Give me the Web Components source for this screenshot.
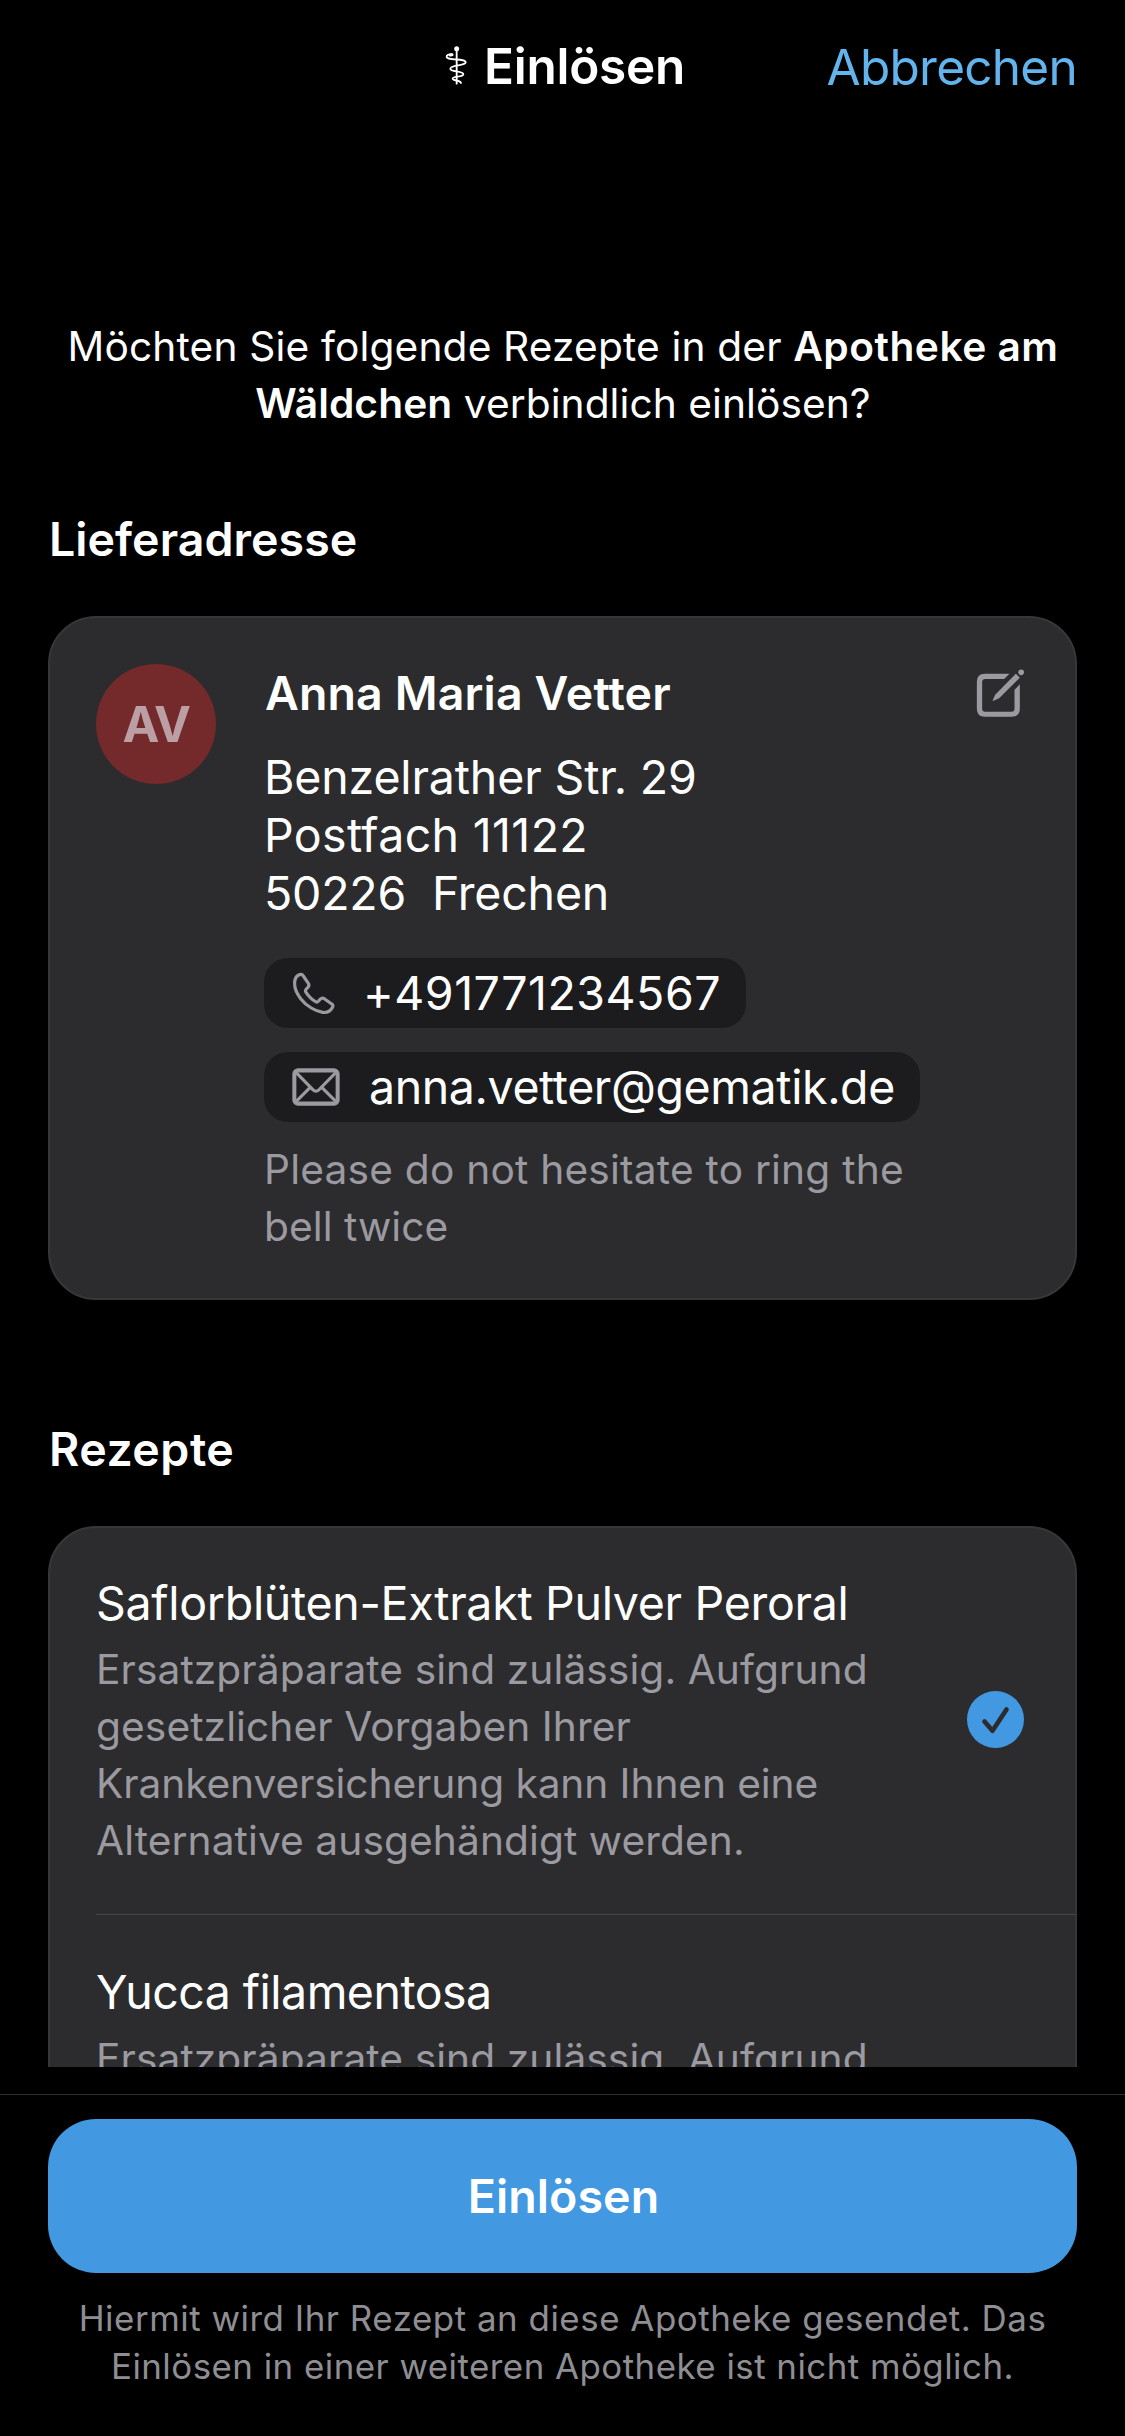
<!DOCTYPE html>
<html lang="de">
<head>
<meta charset="utf-8">
<title>Einlösen</title>
<style>
  html, body { margin: 0; background: #000; }
  body {
    width: 1125px; height: 2436px; overflow: hidden;
    font-family: Inter, "Liberation Sans", sans-serif; color: #fff;
    --card: #2c2c2e; --card-edge: #37373a; --muted: #9b9aa1; --accent: #4299e1;
  }
</style>
</head>
<body>
<redeem-screen>
  <nav-header slot="header" action="Abbrechen">Einlösen</nav-header>

  <intro-text><span style="letter-spacing:.14px">Möchten Sie folgende Rezepte in der </span><b style="letter-spacing:.5px">Apotheke am</b><br><b style="letter-spacing:.1px">Wäldchen</b> <span style="letter-spacing:.05px">verbindlich einlösen?</span></intro-text>

  <content-section label="Lieferadresse" style="--label-spacing:.05px">
    <address-card initials="AV">
      <span slot="name">Anna Maria Vetter</span>
      <span slot="address"><span style="letter-spacing:-.15px">Benzelrather Str. 29</span><br><span style="letter-spacing:.35px">Postfach 11122</span><br><span style="letter-spacing:-.2px">50226&nbsp; Frechen</span></span>
      <contact-pill slot="contact" icon="phone" style="width:482px;letter-spacing:.5px">+491771234567</contact-pill>
      <contact-pill slot="contact" icon="mail" style="width:656px;letter-spacing:-.4px;--gap:29px">anna.vetter@gematik.de</contact-pill>
      <span slot="note">Please do not hesitate to ring the<br><span style="letter-spacing:.05px">bell twice</span></span>
    </address-card>
  </content-section>

  <content-section label="Rezepte" style="--label-spacing:.5px">
    <prescription-list>
      <prescription-row checked>
        <span slot="title" style="letter-spacing:-.3px">Saflorblüten-Extrakt Pulver Peroral</span>
        Ersatzpräparate sind zulässig. Aufgrund gesetzlicher Vorgaben Ihrer <span style="letter-spacing:-.1px">Krankenversicherung kann Ihnen eine</span> Alternative ausgehändigt werden.
      </prescription-row>
      <prescription-row>
        <span slot="title" style="letter-spacing:-.52px">Yucca filamentosa</span>
        Ersatzpräparate sind zulässig. Aufgrund
      </prescription-row>
    </prescription-list>
  </content-section>

  <action-footer slot="footer" label="Einlösen">Hiermit wird Ihr Rezept an diese Apotheke gesendet. Das<br><span style="letter-spacing:.46px">Einlösen in einer weiteren Apotheke ist nicht möglich.</span></action-footer>
</redeem-screen>

<script>
const define = (name, render) => customElements.define(name, class extends HTMLElement {
  constructor() { super(); this.attachShadow({ mode: 'open' }); }
  connectedCallback() { this.shadowRoot.innerHTML = render(this); }
});

const icons = {
  staff: `<svg width="24" height="40" viewBox="24 30 72 120" fill="none" stroke="#fff" stroke-linecap="round">
    <circle cx="62" cy="38" r="7.500" fill="#fff" stroke="none"/>
    <path d="M62 38V143" stroke-width="5.500"/>
    <path d="M48 56C38 53 31 57 32 63C34 75 89 66 89 79C88 90 43 86 43 98C43 109 82 103 82 115C81 124 49 120 50 128C52 135 72 132 75 141" stroke-width="5.500"/>
    <path d="M48 56l-6 1" stroke-width="9"/></svg>`,
  phone: `<svg width="43" height="43" viewBox="24 30 129 129" fill="none" stroke="#9b9aa1" stroke-width="9.500" stroke-linejoin="round">
    <path d="M44 39C50 36 55 37 58 42L73 64C76 69 75 73 71 77L66 82C63 86 64 88 66 91C74 103 84 113 95 119C98 121 101 120 104 117L108 112C112 108 116 107 121 110L142 125C147 128 148 132 145 137C138 149 128 153 116 151C95 148 68 133 50 110C36 92 31 76 32 62C32 51 35 44 44 39Z"/></svg>`,
  mail: `<svg width="48" height="38" viewBox="26 317 143 113" fill="none" stroke="#9b9aa1" stroke-width="12">
    <rect x="33" y="324" width="129" height="99" rx="11"/>
    <path d="M35 327L88 381Q97.500 391 107 381L160 327M35 420L81 374M160 420L114 374" stroke-width="9.500"/></svg>`,
  edit: `<svg width="49" height="48" viewBox="112 88 146 144" fill="#9b9aa1">
    <path d="M212 102H138Q114 102 114 126V207Q114 231 138 231H218Q243 231 243 207V134L227 150V207Q227 216 218 216H139Q130 216 130 207V127Q130 118 139 118H196Z"/>
    <path d="M231 102L243 114L181 176L164 183.500Q161 184 162 181L169 165Z"/>
    <circle cx="247" cy="98" r="8.500"/></svg>`,
  check: `<svg width="57" height="57" viewBox="80.500 92.500 171 171">
    <circle cx="166" cy="178" r="85.500" fill="#4299e1"/>
    <path d="M133 184L157 212L199 148" fill="none" stroke="#2c2c2e" stroke-width="14" stroke-linecap="round" stroke-linejoin="round"/></svg>`
};

define('redeem-screen', () => `<style>
  :host { display: flex; flex-direction: column; height: 2436px; }
  main { height: 1935px; overflow: hidden; }
  </style><slot name="header"></slot><main><slot></slot></main><slot name="footer"></slot>`);

define('nav-header', el => `<style>
  :host { display: grid; grid-template-columns: 1fr auto 1fr; align-items: start; box-sizing: border-box;
    height: 132px; padding: 36px 48px 0; font-size: 49.5px; line-height: 60px; }
  h1 { grid-column: 2; display: flex; align-items: center; gap: 16px; margin: 0; padding-left: 4px;
    font: inherit; font-weight: 600; letter-spacing: -.25px; }
  svg { display: block; }
  a { justify-self: end; margin-top: 1px; color: #63b3ed; letter-spacing: -.73px; }
  </style><h1>${icons.staff}<span><slot></slot></span></h1><a>${el.getAttribute('action')}</a>`);

define('intro-text', () => `<style>
  :host { display: block; padding: 186px 47px 77px 48px; text-align: center; font-size: 40.7px; line-height: 57px; }
  ::slotted(b) { font-weight: 600; }
  </style><slot></slot>`);

define('content-section', el => `<style>
  :host { display: block; padding: 0 48px; margin-bottom: 119px; }
  h2 { margin: 0 0 47px 1px; font-size: 46.5px; line-height: 60px; font-weight: 600; letter-spacing: var(--label-spacing); }
  </style><h2>${el.getAttribute('label')}</h2><slot></slot>`);

define('address-card', el => `<style>
  :host { display: flex; box-sizing: border-box; gap: 48px; height: 684px; padding: 46px; border: 2px solid var(--card-edge);
    border-radius: 48px; background: var(--card); font-size: 46.5px; line-height: 58px; }
  .avatar { flex: none; display: grid; place-items: center; width: 120px; height: 120px; border-radius: 50%;
    background: #742a2a; color: #bb9fa5; font-size: 49.5px; font-weight: 700; letter-spacing: -1.5px; }
  .body { flex: 1; }
  .name { margin-left: 1px; font-weight: 600; letter-spacing: .12px; }
  .address { margin: 26px 0 36px; }
  .contacts { display: flex; flex-direction: column; align-items: flex-start; gap: 24px; }
  .note { width: 680px; margin-top: 19px; color: var(--muted); font-size: 40.7px; line-height: 57px; letter-spacing: .2px; }
  .edit { margin: 5px 4px 0 -48px; }
  svg { display: block; }
  </style><div class="avatar">${el.getAttribute('initials')}</div>
  <div class="body"><div class="name"><slot name="name"></slot></div>
  <div class="address"><slot name="address"></slot></div>
  <div class="contacts"><slot name="contact"></slot></div>
  <div class="note"><slot name="note"></slot></div></div>
  <div class="edit">${icons.edit}</div>`);

define('contact-pill', el => `<style>
  :host { display: flex; align-items: center; gap: var(--gap, 28px); box-sizing: border-box; height: 70px; padding-left: 28px;
    border-radius: 24px; background: #1c1c1e; line-height: 70px; white-space: nowrap; }
  svg { display: block; flex: none; }
  </style>${icons[el.getAttribute('icon')]}<span><slot></slot></span>`);

define('prescription-list', () => `<style>
  :host { display: block; border: 2px solid var(--card-edge); border-radius: 48px; background: var(--card); }
  ::slotted(:first-child) { --row-top: 46px; --row-rule: none; }
  </style><slot></slot>`);

define('prescription-row', el => `<style>
  :host { display: block; padding-left: 46px; }
  .row { display: flex; align-items: center; justify-content: space-between; padding: var(--row-top, 48px) 51px 45px 0;
    border-top: var(--row-rule, 1px solid #464648); }
  .title { font-size: 46.5px; line-height: 58px; margin-bottom: 9px; }
  .text { width: 800px; color: var(--muted); font-size: 40.7px; line-height: 57px; letter-spacing: .08px; }
  svg { display: block; position: relative; top: -2px; }
  </style><div class="row"><div><div class="title"><slot name="title"></slot></div>
  <div class="text"><slot></slot></div></div>${el.hasAttribute('checked') ? icons.check : ''}</div>`);

define('action-footer', el => `<style>
  :host { display: block; margin-top: 27px; padding: 24px 48px 0; border-top: 1px solid #303030; }
  button { display: block; width: 100%; height: 154px; padding: 0 0 0 2px; border: 0; border-radius: 48px; background: var(--accent);
    color: #fff; font: 600 46.5px/60px Inter, "Liberation Sans", sans-serif; letter-spacing: .1px; }
  p { margin: 21px 0 0; color: #8e8e93; text-align: center; font-size: 34.9px; line-height: 48px; letter-spacing: .52px; }
  </style><button>${el.getAttribute('label')}</button><p><slot></slot></p>`);
</script>
</body>
</html>
